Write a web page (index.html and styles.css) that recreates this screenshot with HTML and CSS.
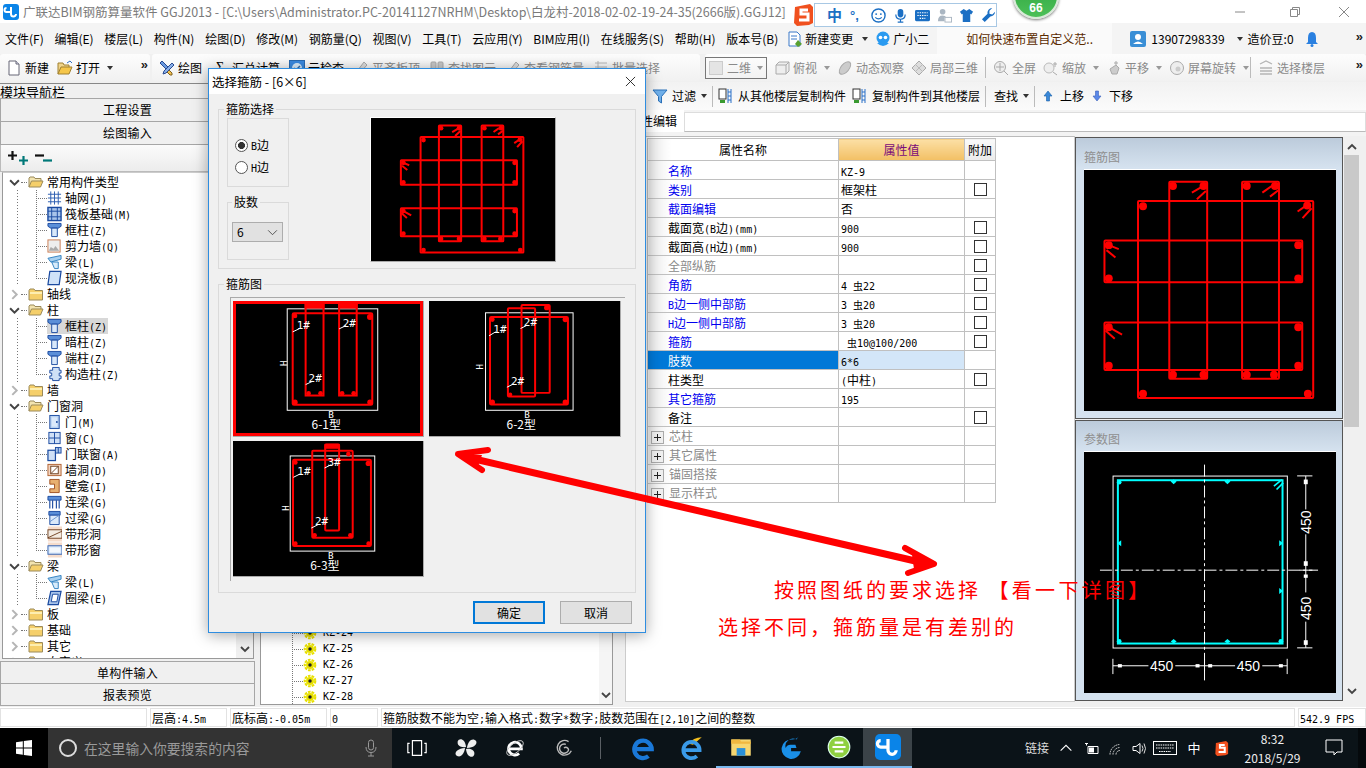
FILE: index.html
```html
<!DOCTYPE html>
<html lang="zh">
<head>
<meta charset="utf-8">
<title>广联达BIM钢筋算量软件 GGJ2013</title>
<link rel="stylesheet" href="styles.css">
</head>
<body>
<svg class="defs" aria-hidden="true">
  <symbol id="logo" viewBox="0 0 16 16"><rect x="0" y="0" width="16" height="16" rx="3" fill="#0a84e8"/><path d="M8 3v7a2.5 2.5 0 0 0 5 0M8 8H3.5a2 2 0 0 1 0-4" fill="none" stroke="#fff" stroke-width="2"/></symbol>
  <symbol id="folder" viewBox="0 0 16 16"><path d="M1 4.5 2 3h4l1 1.5h7.5V14H1z" fill="#f5cf6a" stroke="#9b8a5a"/><path d="M2 6h12v2H2z" fill="#fdeeb0"/></symbol>
  <symbol id="folderopen" viewBox="0 0 16 16"><path d="M1 13V4l1-1h4l1 1.5h6V7" fill="#f3e4b0" stroke="#9b8a5a"/><path d="M1 13 3.5 7H15l-2.5 6z" fill="#f5cf6a" stroke="#9b8a5a"/></symbol>
  <symbol id="col" viewBox="0 0 16 16"><path d="M1 1h14v3l-3 2H4L1 4z" fill="#5b8fd8" stroke="#1a4aa0"/><path d="M5 6h6v9H5z" fill="#d8e8fb" stroke="#1a4aa0"/></symbol>
  <symbol id="gridic" viewBox="0 0 16 16"><path d="M1 4h14M1 8h14M1 12h14M4 1v14M8 1v14M12 1v14" stroke="#2a5cb0" fill="none"/></symbol>
  <symbol id="raft" viewBox="0 0 16 16"><rect x="1" y="1" width="14" height="14" fill="#a8c4ea" stroke="#1a4aa0" stroke-width="1.5"/><path d="M1 5h14M1 11h14M5 1v14M11 1v14" stroke="#1a4aa0" fill="none"/></symbol>
  <symbol id="shear" viewBox="0 0 16 16"><rect x="1" y="1.500" width="13" height="13" fill="#eee" stroke="#c87a50"/><path d="M2 13 4 9l3 2 2-3 4 5z" fill="#aaa"/></symbol>
  <symbol id="beam" viewBox="0 0 16 16"><path d="M1 4 15 1v4L4 8z" fill="#a8d0f0" stroke="#3080c0"/><path d="M5 8h7v7H8z" fill="#d8ecfb" stroke="#3080c0"/></symbol>
  <symbol id="slab" viewBox="0 0 16 16"><path d="M3 1h12l-2 14H1z" fill="#cfe2f8" stroke="#1a4aa0" stroke-width="1.300"/></symbol>
  <symbol id="ccol" viewBox="0 0 16 16"><path d="M6 1h7v3h2v3h-2v3h2v3h-2v2H6v-2H3v-3h2V7H3V4h3z" fill="#cfe0f6" stroke="#1a4aa0"/></symbol>
  <symbol id="door" viewBox="0 0 16 16"><rect x="3" y="1" width="10" height="14" fill="#b8d2f2" stroke="#1a4aa0"/><rect x="5" y="3" width="6" height="10" fill="#dbe9fa"/><circle cx="10.500" cy="8" r="1" fill="#1a4aa0"/></symbol>
  <symbol id="window" viewBox="0 0 16 16"><rect x="2" y="2" width="12" height="12" fill="#cfe0f6" stroke="#1a4aa0"/><path d="M8 2v12M2 8h12" stroke="#1a4aa0"/></symbol>
  <symbol id="dw" viewBox="0 0 16 16"><rect x="1" y="4" width="8" height="11" fill="#cfe0f6" stroke="#1a4aa0" stroke-width="1.300"/><rect x="9" y="1" width="6" height="6" fill="#a8c4ea" stroke="#1a4aa0"/><path d="M12 1v6" stroke="#1a4aa0"/></symbol>
  <symbol id="hole" viewBox="0 0 16 16"><rect x="1" y="2" width="14" height="12" fill="#f3d5c0" stroke="#b06030"/><rect x="4" y="4" width="8" height="8" fill="#fff" stroke="#704020"/><path d="M4 12l8-8" stroke="#704020"/></symbol>
  <symbol id="niche" viewBox="0 0 16 16"><path d="M3 1h10v14H3v-4h5V6H3z" fill="#e8b070" stroke="#a05020"/></symbol>
  <symbol id="lb" viewBox="0 0 16 16"><path d="M1 2h14v4H1z" fill="#5b8fd8" stroke="#1a4aa0"/><path d="M3 6v9M6 6v9M10 6v9M13 6v9" stroke="#1a4aa0" fill="none" stroke-width="1.200"/></symbol>
  <symbol id="lintel" viewBox="0 0 16 16"><path d="M2 1h12v4H2z" fill="#5b8fd8" stroke="#1a4aa0"/><path d="M3 5h10v10H3z" fill="#dbe9fa" stroke="#1a4aa0"/><path d="M3 12 13 5" stroke="#6a94d0"/></symbol>
  <symbol id="bandh" viewBox="0 0 16 16"><rect x="1" y="0" width="15" height="16" fill="#f6dccb"/><rect x="1" y="3.500" width="15" height="9" fill="#f3ebe2" stroke="#704020"/><path d="M1 12 16 5" stroke="#704020"/></symbol>
  <symbol id="bandw" viewBox="0 0 16 16"><rect x="1" y="0" width="15" height="16" fill="#f6dccb"/><rect x="1" y="3.500" width="15" height="9" fill="#dbe9fa" stroke="#3060b0"/><rect x="3" y="5.500" width="11" height="5" fill="#f4f8fd"/></symbol>
  <symbol id="ring" viewBox="0 0 16 16"><path d="M4 1h11l-3 14H1z" fill="#a8c4ea" stroke="#1a4aa0" stroke-width="1.300"/><path d="M6 4h6l-1.500 8H4.500z" fill="#fff" stroke="#1a4aa0"/></symbol>
  <symbol id="gear" viewBox="0 0 16 16"><circle cx="8" cy="8" r="6" fill="none" stroke="#e8e000" stroke-width="2.500" stroke-dasharray="3 1.200"/><circle cx="8" cy="8" r="4.500" fill="#e8e000"/><circle cx="8" cy="8" r="2" fill="#222"/></symbol>
  <symbol id="caretd" viewBox="0 0 10 10"><path d="M1 3l4 4 4-4" fill="none" stroke="#444" stroke-width="1.800"/></symbol>
  <symbol id="caretu" viewBox="0 0 10 10"><path d="M1 7l4-4 4 4" fill="none" stroke="#444" stroke-width="1.800"/></symbol>
  <symbol id="caretr" viewBox="0 0 10 10"><path d="M3 1l4 4-4 4" fill="none" stroke="#b5b5b5" stroke-width="1.800"/></symbol>
  <symbol id="new" viewBox="0 0 16 16"><path d="M3 1h7l3 3v11H3z" fill="#fff" stroke="#667"/><path d="M10 1v3h3" fill="#dde" stroke="#667"/></symbol>
  <symbol id="open" viewBox="0 0 16 16"><path d="M1 14V3h5l1 2h5v2" fill="#f0d48a" stroke="#a08030"/><path d="M1 14 4 7h11l-3 7z" fill="#f5c64a" stroke="#a08030"/><path d="M10 3l3-2 2 2" fill="none" stroke="#3070c0"/></symbol>
  <symbol id="draw" viewBox="0 0 16 16"><path d="M3 1l6 6-2 2-6-6z" fill="#6a9ae0" stroke="#2a4a90"/><path d="M8 8l5 5v2h-2L6 10z" fill="#f0c050" stroke="#806020"/><path d="M13 3l2 2-8 8-3 1 1-3z" fill="#8ab0e8" stroke="#2a4a90"/></symbol>
  <symbol id="cloud" viewBox="0 0 16 16"><rect x="0.500" y="0.500" width="15" height="15" fill="#3a8ae0" stroke="#2a6ab0"/><circle cx="8" cy="8" r="5" fill="#d8ecfb"/><path d="M5 8l2 2 4-4" fill="none" stroke="#2a6ab0" stroke-width="1.500"/></symbol>
  <symbol id="graytool" viewBox="0 0 16 16"><path d="M2 14 11 2l3 3-9 10z" fill="#ddd" stroke="#aaa"/></symbol>
  <symbol id="binoc" viewBox="0 0 16 16"><rect x="2" y="2" width="5" height="12" rx="1" fill="#c9c9c9" stroke="#aaa"/><rect x="9" y="2" width="5" height="12" rx="1" fill="#c9c9c9" stroke="#aaa"/></symbol>
  <symbol id="tree3" viewBox="0 0 16 16"><path d="M2 3h12M2 7h12M2 11h12M5 1v14" stroke="#b8b8b8" fill="none"/></symbol>
  <symbol id="cube" viewBox="0 0 16 16"><path d="M2 5 5 2h10v9l-3 3H2z" fill="#eee" stroke="#aaa"/><path d="M2 5h10v9M12 5l3-3" fill="none" stroke="#aaa"/></symbol>
  <symbol id="orbit" viewBox="0 0 16 16"><ellipse cx="8" cy="8" rx="4" ry="7.500" transform="rotate(40 8 8)" fill="#ccc" stroke="#aaa"/></symbol>
  <symbol id="cubes" viewBox="0 0 16 16"><path d="M8 1l7 7-7 7-7-7z" fill="#ddd" stroke="#aaa"/><path d="M4 4l8 8M12 4l-8 8" stroke="#bbb"/></symbol>
  <symbol id="zoomall" viewBox="0 0 16 16"><circle cx="7" cy="7" r="5.500" fill="#eee" stroke="#aaa"/><path d="M7 3v8M3 7h8M11 11l4 4" stroke="#aaa"/></symbol>
  <symbol id="zoomi" viewBox="0 0 16 16"><circle cx="6" cy="8" r="5" fill="#eee" stroke="#bbb"/><path d="M10 12l4 3M12 2v5M10 4h4" stroke="#aaa"/></symbol>
  <symbol id="hand" viewBox="0 0 16 16"><path d="M4 9l6-4 3 3-2 6H6z" fill="#ccc" stroke="#aaa"/><path d="M10 5V1M8 3h4" stroke="#aaa"/></symbol>
  <symbol id="rotate" viewBox="0 0 16 16"><circle cx="8" cy="8" r="6.500" fill="#eee" stroke="#aaa"/><circle cx="9" cy="9" r="2.500" fill="#ccc"/></symbol>
  <symbol id="layers" viewBox="0 0 16 16"><path d="M2 4l6-3 6 3M2 8h12M2 11h12M2 14h12" fill="none" stroke="#b5b5b5" stroke-width="1.300"/></symbol>
  <symbol id="doc" viewBox="0 0 16 16"><path d="M2 1h8l3 3v11H2z" fill="#fff" stroke="#3a78c8"/><path d="M4 5h6M4 8h6" stroke="#3a78c8"/><path d="M11 9l4 4-4 3-3-3z" fill="#58a030"/></symbol>
  <symbol id="mascot" viewBox="0 0 16 16"><circle cx="8" cy="7" r="6.500" fill="#2a9af0"/><path d="M2 12q6 6 12 0" fill="#2a9af0"/><circle cx="5.500" cy="6.500" r="1.800" fill="#fff"/><circle cx="10.500" cy="6.500" r="1.800" fill="#fff"/></symbol>
  <symbol id="user" viewBox="0 0 16 16"><rect width="16" height="16" rx="2" fill="#3a8fd6"/><circle cx="8" cy="6" r="3" fill="#fff"/><path d="M3 13q5-5 10 0z" fill="#fff"/></symbol>
  <symbol id="bell" viewBox="0 0 16 16"><path d="M8 1q-4 0-4 6v4l-2 2h12l-2-2V7q0-6-4-6z" fill="#2a80e0"/><circle cx="8" cy="14.500" r="1.500" fill="#2a80e0"/></symbol>
  <symbol id="funnel" viewBox="0 0 16 16"><path d="M1 2h14L9.500 8.500V15l-3-2V8.500z" fill="#70b0ea" stroke="#2a70b8"/></symbol>
  <symbol id="copyin" viewBox="0 0 16 16"><rect x="1" y="1" width="7" height="10" fill="#fff" stroke="#333"/><path d="M10 1v14M13 1v14M10 4h3M10 8h3M10 12h3" stroke="#2a70c8"/><path d="M2 12h5v3H2z" fill="#3a9a30"/></symbol>
  <symbol id="up" viewBox="0 0 16 16"><path d="M8 3l4 5h-2.500v5h-3V8H4z" fill="#3a88d8" stroke="#1a60a8" stroke-width=".6"/></symbol>
  <symbol id="down" viewBox="0 0 16 16"><path d="M8 13l4-5H9.500V3h-3v5H4z" fill="#5a88e8" stroke="#3a60b8" stroke-width=".6"/></symbol>
  <symbol id="sogou" viewBox="0 0 20 22"><path d="M1 3 16 0l3 3v16l-4 2-12 1-3-3z" fill="#f0501e"/><path d="M14 6H7v4h7v6H5" fill="none" stroke="#fff" stroke-width="3"/></symbol>
  <symbol id="rebar" viewBox="-49 113 939 733">
    <g fill="none" stroke="#f00" stroke-width="2">
      <rect x="203" y="210" width="527" height="593" rx="3" vector-effect="non-scaling-stroke"/>
      <rect x="102" y="329" width="595" height="126" rx="3" vector-effect="non-scaling-stroke"/>
      <rect x="102" y="576" width="595" height="143" rx="3" vector-effect="non-scaling-stroke"/>
      <rect x="297" y="152" width="114" height="593" rx="3" vector-effect="non-scaling-stroke"/>
      <rect x="516" y="152" width="111" height="593" rx="3" vector-effect="non-scaling-stroke"/>
      <path d="M400 165 365 185M407 180 380 205M605 165 577 185M625 178 600 197M712 222 683 242M725 232 698 262M115 343 145 355M108 358 135 380M115 590 155 612M105 600 133 625" vector-effect="non-scaling-stroke"/>
    </g>
    <g fill="#f00">
      <circle cx="218" cy="226" r="12"/><circle cx="712" cy="224" r="12"/><circle cx="218" cy="790" r="12"/><circle cx="714" cy="790" r="12"/>
      <circle cx="115" cy="343" r="12"/><circle cx="685" cy="343" r="12"/><circle cx="115" cy="443" r="12"/><circle cx="685" cy="443" r="12"/>
      <circle cx="115" cy="590" r="12"/><circle cx="685" cy="590" r="12"/><circle cx="115" cy="706" r="12"/><circle cx="685" cy="706" r="12"/>
      <circle cx="308" cy="165" r="12"/><circle cx="400" cy="165" r="12"/><circle cx="308" cy="733" r="12"/><circle cx="400" cy="733" r="12"/>
      <circle cx="530" cy="165" r="12"/><circle cx="615" cy="165" r="12"/><circle cx="530" cy="733" r="12"/><circle cx="612" cy="733" r="12"/>
    </g>
  </symbol>
</svg>

<div class="desk">
  <header class="titlebar">
    <svg class="ic logo"><use href="#logo"/></svg>
    <span class="title-text">广联达BIM钢筋算量软件 GGJ2013 - [C:\Users\Administrator.PC-20141127NRHM\Desktop\白龙村-2018-02-02-19-24-35(2666版).GGJ12]</span>
    <div class="winctl">
      <svg class="wc" viewBox="0 0 12 12"><path d="M1 6h10" stroke="#888"/></svg>
      <svg class="wc" viewBox="0 0 12 12"><path d="M1.500 3.500h7v7h-7zM3.500 3.500v-2h7v7h-2" fill="none" stroke="#888"/></svg>
      <svg class="wc" viewBox="0 0 12 12"><path d="M1 1l10 10M11 1 1 11" stroke="#888"/></svg>
    </div>
  </header>

  <nav class="menubar">
    <div class="menus">
      <span>文件(F)</span><span>编辑(E)</span><span>楼层(L)</span><span>构件(N)</span><span>绘图(D)</span><span>修改(M)</span><span>钢筋量(Q)</span><span>视图(V)</span><span>工具(T)</span><span>云应用(Y)</span><span>BIM应用(I)</span><span>在线服务(S)</span><span>帮助(H)</span><span>版本号(B)</span>
    </div>
    <div class="menu-extra">
      <svg class="ic"><use href="#doc"/></svg><span>新建变更</span><i class="tri"></i>
      <svg class="ic mascot"><use href="#mascot"/></svg><span>广小二</span>
    </div>
    <div class="tipbox">如何快速布置自定义范..</div>
    <div class="account">
      <svg class="ic"><use href="#user"/></svg><span>13907298339</span><i class="tri"></i><span class="bean">造价豆:0</span>
      <svg class="ic bell"><use href="#bell"/></svg><span class="more">»</span>
    </div>
  </nav>

  <div class="toolbar">
    <div class="chunk chunk-a">
      <span class="tool"><svg class="ic"><use href="#new"/></svg>新建</span>
      <span class="tool"><svg class="ic"><use href="#open"/></svg>打开<i class="tri"></i></span>
      <span class="more more-a">»</span>
    </div>
    <div class="chunk chunk-b">
      <span class="tool"><svg class="ic"><use href="#draw"/></svg>绘图</span>
      <span class="tool"><b class="sigma">Σ</b>汇总计算</span>
      <span class="tool"><svg class="ic"><use href="#cloud"/></svg>云检查</span>
      <span class="tool off"><svg class="ic"><use href="#graytool"/></svg>平齐板顶</span>
      <span class="tool off"><svg class="ic"><use href="#binoc"/></svg>查找图元</span>
      <span class="tool off"><svg class="ic"><use href="#graytool"/></svg>查看钢筋量</span>
      <span class="tool off"><svg class="ic"><use href="#tree3"/></svg>批量选择</span>
    </div>
    <div class="chunk chunk-c">
      <span class="combo2d"><i class="sq"></i>二维<i class="tri off"></i></span>
      <span class="tool off"><svg class="ic"><use href="#cube"/></svg>俯视<i class="tri off"></i></span>
      <span class="tool off"><svg class="ic"><use href="#orbit"/></svg>动态观察</span>
      <span class="tool off"><svg class="ic"><use href="#cubes"/></svg>局部三维</span>
      <i class="sep"></i>
      <span class="tool off"><svg class="ic"><use href="#zoomall"/></svg>全屏</span>
      <span class="tool off"><svg class="ic"><use href="#zoomi"/></svg>缩放<i class="tri off"></i></span>
      <span class="tool off"><svg class="ic"><use href="#hand"/></svg>平移<i class="tri off"></i></span>
      <span class="tool off"><svg class="ic"><use href="#rotate"/></svg>屏幕旋转<i class="tri off"></i></span>
      <i class="sep sep-tight"></i>
      <span class="tool off"><svg class="ic"><use href="#layers"/></svg>选择楼层</span>
      <span class="more more-c">»</span>
    </div>
  </div>

  <main class="main">
    <aside class="nav">
      <div class="nav-title">模块导航栏</div>
      <div class="nav-btn">工程设置</div>
      <div class="nav-btn">绘图输入</div>
      <div class="nav-tools">
        <svg class="expand" viewBox="0 0 24 14"><path d="M3 4.500h9M7.500 0v9" stroke="#111" stroke-width="2.200" fill="none"/><path d="M14 9.500h9M18.500 5v9" stroke="#007878" stroke-width="2.200" fill="none"/></svg>
        <svg class="expand" viewBox="0 0 24 14"><path d="M6 4.500h9" stroke="#111" stroke-width="2.200"/><path d="M14 9.500h9" stroke="#007878" stroke-width="2.200"/></svg>
      </div>
      <div class="tree-wrap">
        <ul class="tree">
          <li class="grp"><svg class="caret"><use href="#caretd"/></svg><i class="stub"></i><svg class="ic"><use href="#folderopen"/></svg><span class="lb">常用构件类型</span></li>
          <li><ul class="kids">
            <li class="kid"><i class="elbow"></i><svg class="ic"><use href="#gridic"/></svg><span class="lb">轴网<span class="a">(J)</span></span></li>
            <li class="kid"><i class="elbow"></i><svg class="ic"><use href="#raft"/></svg><span class="lb">筏板基础<span class="a">(M)</span></span></li>
            <li class="kid"><i class="elbow"></i><svg class="ic"><use href="#col"/></svg><span class="lb">框柱<span class="a">(Z)</span></span></li>
            <li class="kid"><i class="elbow"></i><svg class="ic"><use href="#shear"/></svg><span class="lb">剪力墙<span class="a">(Q)</span></span></li>
            <li class="kid"><i class="elbow"></i><svg class="ic"><use href="#beam"/></svg><span class="lb">梁<span class="a">(L)</span></span></li>
            <li class="kid last"><i class="elbow"></i><svg class="ic"><use href="#slab"/></svg><span class="lb">现浇板<span class="a">(B)</span></span></li>
          </ul></li>
          <li class="grp"><svg class="caret"><use href="#caretr"/></svg><i class="stub"></i><svg class="ic"><use href="#folder"/></svg><span class="lb">轴线</span></li>
          <li class="grp"><svg class="caret"><use href="#caretd"/></svg><i class="stub"></i><svg class="ic"><use href="#folderopen"/></svg><span class="lb">柱</span></li>
          <li><ul class="kids">
            <li class="kid sel"><i class="elbow"></i><span class="hl"><svg class="ic"><use href="#col"/></svg><span class="lb">框柱<span class="a">(Z)</span></span></span></li>
            <li class="kid"><i class="elbow"></i><svg class="ic"><use href="#col"/></svg><span class="lb">暗柱<span class="a">(Z)</span></span></li>
            <li class="kid"><i class="elbow"></i><svg class="ic"><use href="#col"/></svg><span class="lb">端柱<span class="a">(Z)</span></span></li>
            <li class="kid last"><i class="elbow"></i><svg class="ic"><use href="#ccol"/></svg><span class="lb">构造柱<span class="a">(Z)</span></span></li>
          </ul></li>
          <li class="grp"><svg class="caret"><use href="#caretr"/></svg><i class="stub"></i><svg class="ic"><use href="#folder"/></svg><span class="lb">墙</span></li>
          <li class="grp"><svg class="caret"><use href="#caretd"/></svg><i class="stub"></i><svg class="ic"><use href="#folderopen"/></svg><span class="lb">门窗洞</span></li>
          <li><ul class="kids">
            <li class="kid"><i class="elbow"></i><svg class="ic"><use href="#door"/></svg><span class="lb">门<span class="a">(M)</span></span></li>
            <li class="kid"><i class="elbow"></i><svg class="ic"><use href="#window"/></svg><span class="lb">窗<span class="a">(C)</span></span></li>
            <li class="kid"><i class="elbow"></i><svg class="ic"><use href="#dw"/></svg><span class="lb">门联窗<span class="a">(A)</span></span></li>
            <li class="kid"><i class="elbow"></i><svg class="ic"><use href="#hole"/></svg><span class="lb">墙洞<span class="a">(D)</span></span></li>
            <li class="kid"><i class="elbow"></i><svg class="ic"><use href="#niche"/></svg><span class="lb">壁龛<span class="a">(I)</span></span></li>
            <li class="kid"><i class="elbow"></i><svg class="ic"><use href="#lb"/></svg><span class="lb">连梁<span class="a">(G)</span></span></li>
            <li class="kid"><i class="elbow"></i><svg class="ic"><use href="#lintel"/></svg><span class="lb">过梁<span class="a">(G)</span></span></li>
            <li class="kid"><i class="elbow"></i><svg class="ic"><use href="#bandh"/></svg><span class="lb">带形洞</span></li>
            <li class="kid last"><i class="elbow"></i><svg class="ic"><use href="#bandw"/></svg><span class="lb">带形窗</span></li>
          </ul></li>
          <li class="grp"><svg class="caret"><use href="#caretd"/></svg><i class="stub"></i><svg class="ic"><use href="#folderopen"/></svg><span class="lb">梁</span></li>
          <li><ul class="kids">
            <li class="kid"><i class="elbow"></i><svg class="ic"><use href="#beam"/></svg><span class="lb">梁<span class="a">(L)</span></span></li>
            <li class="kid last"><i class="elbow"></i><svg class="ic"><use href="#ring"/></svg><span class="lb">圈梁<span class="a">(E)</span></span></li>
          </ul></li>
          <li class="grp"><svg class="caret"><use href="#caretr"/></svg><i class="stub"></i><svg class="ic"><use href="#folder"/></svg><span class="lb">板</span></li>
          <li class="grp"><svg class="caret"><use href="#caretr"/></svg><i class="stub"></i><svg class="ic"><use href="#folder"/></svg><span class="lb">基础</span></li>
          <li class="grp"><svg class="caret"><use href="#caretr"/></svg><i class="stub"></i><svg class="ic"><use href="#folder"/></svg><span class="lb">其它</span></li>
          <li class="grp"><svg class="caret"><use href="#caretr"/></svg><i class="stub"></i><svg class="ic"><use href="#folder"/></svg><span class="lb">自定义</span></li>
        </ul>
        <div class="vscroll"><svg class="arrow"><use href="#caretd"/></svg></div>
      </div>
      <div class="nav-btn low">单构件输入</div>
      <div class="nav-btn low">报表预览</div>
    </aside>

    <section class="mid">
      <ul class="kz">
        <li><i class="kzline"></i><svg class="ic"><use href="#gear"/></svg><span>KZ-24</span></li>
        <li><i class="kzline"></i><svg class="ic"><use href="#gear"/></svg><span>KZ-25</span></li>
        <li><i class="kzline"></i><svg class="ic"><use href="#gear"/></svg><span>KZ-26</span></li>
        <li><i class="kzline"></i><svg class="ic"><use href="#gear"/></svg><span>KZ-27</span></li>
        <li><i class="kzline"></i><svg class="ic"><use href="#gear"/></svg><span>KZ-28</span></li>
      </ul>
      <div class="vscroll vs-mid"><svg class="arrow"><use href="#caretd"/></svg></div>
    </section>

    <section class="right">
      <div class="row3">
        <span class="tool"><svg class="ic"><use href="#funnel"/></svg>过滤<i class="tri"></i></span>
        <i class="sep"></i>
        <span class="tool"><svg class="ic"><use href="#copyin"/></svg>从其他楼层复制构件</span>
        <span class="tool copy2"><svg class="ic"><use href="#copyin"/></svg>复制构件到其他楼层</span>
        <i class="sep"></i>
        <span class="tool find">查找<i class="tri"></i></span>
        <i class="sep"></i>
        <span class="tool"><svg class="ic"><use href="#up"/></svg>上移</span>
        <span class="tool"><svg class="ic"><use href="#down"/></svg>下移</span>
      </div>
      <div class="tabs"><span class="tab">属性编辑</span><span class="tabfill"></span></div>
      <div class="body">
        <div class="sheet">
          <table class="props">
            <thead><tr><th>属性名称</th><th class="th-val">属性值</th><th class="th-add">附加</th></tr></thead>
            <tbody>
              <tr class="blue"><td>名称</td><td><span class="a">KZ-9</span></td><td></td></tr>
              <tr class="blue"><td>类别</td><td>框架柱</td><td><i class="chk"></i></td></tr>
              <tr class="blue"><td>截面编辑</td><td>否</td><td></td></tr>
              <tr><td>截面宽<span class="a">(B</span>边<span class="a">)(mm)</span></td><td><span class="a">900</span></td><td><i class="chk"></i></td></tr>
              <tr><td>截面高<span class="a">(H</span>边<span class="a">)(mm)</span></td><td><span class="a">900</span></td><td><i class="chk"></i></td></tr>
              <tr class="gray"><td>全部纵筋</td><td></td><td><i class="chk"></i></td></tr>
              <tr class="blue"><td>角筋</td><td><span class="a">4 </span><span class="bar">虫</span><span class="a">22</span></td><td><i class="chk"></i></td></tr>
              <tr class="blue"><td><span class="a">B</span>边一侧中部筋</td><td><span class="a">3 </span><span class="bar">虫</span><span class="a">20</span></td><td><i class="chk"></i></td></tr>
              <tr class="blue"><td><span class="a">H</span>边一侧中部筋</td><td><span class="a">3 </span><span class="bar">虫</span><span class="a">20</span></td><td><i class="chk"></i></td></tr>
              <tr class="blue"><td>箍筋</td><td><span class="a"> </span><span class="bar">虫</span><span class="a">10@100/200</span></td><td><i class="chk"></i></td></tr>
              <tr class="cur"><td>肢数</td><td><span class="a">6*6</span></td><td></td></tr>
              <tr><td>柱类型</td><td><span class="a">(</span>中柱<span class="a">)</span></td><td><i class="chk"></i></td></tr>
              <tr class="blue"><td>其它箍筋</td><td><span class="a">195</span></td><td></td></tr>
              <tr><td>备注</td><td></td><td><i class="chk"></i></td></tr>
              <tr class="gray"><td><i class="plus"></i>芯柱</td><td></td><td></td></tr>
              <tr class="gray"><td><i class="plus"></i>其它属性</td><td></td><td></td></tr>
              <tr class="gray"><td><i class="plus"></i>锚固搭接</td><td></td><td></td></tr>
              <tr class="gray"><td><i class="plus"></i>显示样式</td><td></td><td></td></tr>
            </tbody>
          </table>
        </div>
        <div class="views">
          <div class="pv pv-a">
            <div class="pv-h">箍筋图</div>
            <svg class="pv-img" viewBox="42 117 755 725"><use href="#rebar" x="-49" y="113" width="939" height="733"/></svg>
          </div>
          <div class="pv pv-b">
            <div class="pv-h">参数图</div>
            <svg class="pv-img" viewBox="42 107 755 726">
              <rect x="127.500" y="179.500" width="525" height="518" fill="none" stroke="#fff" stroke-width="3"/>
              <rect x="142" y="192" width="496" height="492" fill="none" stroke="#0ff" stroke-width="6"/>
              <path d="M403 145V795M88 463H745" stroke="#fff" stroke-width="3" stroke-dasharray="36 9 9 9" fill="none"/>
              <path d="M612 210 636 190M620 220 640 200" stroke="#0ff" stroke-width="5"/>
              <g fill="#0ff">
                <path d="M310 190l9 6-9 8-9-8zM472 190l9 6-9 8-9-8zM310 670l9 8-9 6-9-6zM472 670l9 8-9 6-9-6zM140 382l12-9v18zM640 382l-12-9v18zM640 526l-12-9v18z"/>
                <circle cx="146" cy="198" r="7"/><circle cx="146" cy="677" r="7"/><circle cx="633" cy="677" r="7"/>
              </g>
              <g stroke="#fff" stroke-width="3" fill="none">
                <path d="M682 179h46M682 697h46M708 179V280M708 355V530M708 618V697M690 463h38"/>
                <path d="M127 730v46M652 730v46M403 730v46M127 751H234M315 751H495M577 751H652"/>
              </g>
              <g fill="#fff"><rect x="702" y="190" width="12" height="14"/><rect x="702" y="436" width="12" height="14"/><rect x="702" y="476" width="12" height="10"/><rect x="702" y="674" width="12" height="14"/><rect x="142" y="746" width="12" height="10"/><rect x="376" y="746" width="12" height="10"/><rect x="414" y="746" width="12" height="10"/><rect x="627" y="746" width="12" height="10"/></g>
              <text class="dim" x="274" y="768" text-anchor="middle">450</text>
              <text class="dim" x="535" y="768" text-anchor="middle">450</text>
              <text class="dim" text-anchor="middle" transform="translate(724 318) rotate(-90)">450</text>
              <text class="dim" text-anchor="middle" transform="translate(724 578) rotate(-90)">450</text>
            </svg>
          </div>
        </div>
        <div class="vscroll vs-view"><svg class="arrow arrow-u"><use href="#caretu"/></svg><i class="vs-track"></i><svg class="arrow arrow-d"><use href="#caretd"/></svg></div>
      </div>
    </section>
  </main>

  <footer class="status">
    <span class="cell c1"></span>
    <span class="cell c2">层高<span class="a">:4.5m</span></span>
    <span class="cell c3">底标高<span class="a">:-0.05m</span></span>
    <span class="cell c4"><span class="a">0</span></span>
    <span class="cell c5">箍筋肢数不能为空<span class="a">;</span>输入格式<span class="a">:</span>数字<span class="a">*</span>数字<span class="a">;</span>肢数范围在<span class="a">[2,10]</span>之间的整数</span>
    <span class="cell c6"><span class="a">542.9 FPS</span></span>
  </footer>

  <div class="taskbar">
    <div class="start"><svg class="winlogo" viewBox="0 0 16 16"><path d="M0 2.200 6.800 1.200V7.500H0zM7.800 1 16 0V7.500H7.800zM0 8.500H6.800V14.800L0 13.800zM7.800 8.500H16V16L7.800 15z" fill="#fff"/></svg></div>
    <div class="search"><i class="cortana"></i><span>在这里输入你要搜索的内容</span><svg class="mic" viewBox="0 0 12 18"><rect x="3.500" y="1" width="5" height="10" rx="2.500" fill="none" stroke="#999"/><path d="M1 8q0 5.500 5 5.500T11 8M6 13.500V17M3 17h6" fill="none" stroke="#999"/></svg></div>
    <div class="tb"><svg class="tbi" viewBox="0 0 24 24"><path d="M7 4h10v16H7zM4 7H2v10h2M20 7h2v10h-2" fill="none" stroke="#fff" stroke-width="1.300"/></svg></div>
    <div class="tb"><svg class="tbi" viewBox="0 0 24 24"><g fill="#eee"><path d="M12 11C6 12 2 9 3 5s8-4 9 6z"/><path d="M13 12c1-6 4-10 8-9s4 8-8 9z"/><path d="M12 13c6-1 10 2 9 6s-8 4-9-6z"/><path d="M11 12c-1 6-4 10-8 9s-4-8 8-9z"/></g></svg></div>
    <div class="tb"><svg class="tbi" viewBox="0 0 24 24"><path d="M6 13h13a7 7 0 1 0-2.500 5" fill="none" stroke="#fff" stroke-width="3"/><ellipse cx="12" cy="12" rx="11" ry="5" transform="rotate(-40 12 12)" fill="none" stroke="#ccc"/></svg></div>
    <div class="tb"><svg class="tbi" viewBox="0 0 24 24"><path d="M17 5A8 8 0 1 0 20 15M14 8a5 5 0 1 0 3 6 3 3 0 0 0-5-2" fill="none" stroke="#bbb" stroke-width="1.500"/></svg></div>
    <i class="tbsep"></i>
    <div class="tb"><svg class="tbi big" viewBox="0 0 24 24"><path d="M5 13h15a8 8 0 1 0-3 6.500" fill="none" stroke="#1a78d8" stroke-width="4"/></svg></div>
    <div class="tb"><svg class="tbi big" viewBox="0 0 24 24"><path d="M21 2q-8 0-12 6l4 1z" fill="#f5c020"/><path d="M5 14h14a7.500 7.500 0 1 0-2.500 5.500" fill="none" stroke="#3a9ae8" stroke-width="3.500"/></svg></div>
    <div class="tb run"><svg class="tbi big" viewBox="0 0 24 24"><path d="M3 5h18v15H3z" fill="#f6d670"/><path d="M3 5h8l1 2h9v2H3z" fill="#f0b840"/><rect x="8" y="13" width="8" height="7" fill="#2a90d8"/></svg></div>
    <div class="tb run"><svg class="tbi big" viewBox="0 0 24 24"><path d="M20 2q-2 3-6 3a9 9 0 1 0 8 11h-9v-3h5l-1-3h-4a5 5 0 0 0-5 3 7 7 0 0 1 10-8z" fill="#1a90e8"/></svg></div>
    <div class="tb run"><svg class="tbi big" viewBox="0 0 24 24"><circle cx="12" cy="12" r="10" fill="#8fd040" stroke="#dfe"/><path d="M6 12h12M8 8h8M8 16h8" stroke="#fff" stroke-width="2"/></svg></div>
    <div class="tb run act"><svg class="tbi big" viewBox="0 0 24 24"><use href="#logo"/></svg></div>
    <div class="tray">
      <span class="tray-t">链接</span>
      <svg class="tri-i" viewBox="0 0 14 14"><path d="M2 9l5-5 5 5" fill="none" stroke="#fff"/></svg>
      <svg class="tri-i" viewBox="0 0 16 14"><path d="M1 2h3M2.500 2v2M4 5h10v7H4z" fill="none" stroke="#fff"/><rect x="5" y="6" width="5" height="5" fill="#fff"/></svg>
      <svg class="tri-i" viewBox="0 0 16 14"><path d="M2 13a10 10 0 0 1 10-10M5 13a7 7 0 0 1 7-7M8 13a4 4 0 0 1 4-4" fill="none" stroke="#ddd" stroke-dasharray="1.500 .7"/></svg>
      <svg class="tri-i" viewBox="0 0 16 14"><path d="M2 5h3l4-3v10L5 9H2z" fill="none" stroke="#fff"/><path d="M11 4q2 3 0 6M13 2q3 5 0 10" fill="none" stroke="#ddd"/></svg>
      <svg class="tri-kb" viewBox="0 0 24 16"><rect x=".5" y="1.500" width="23" height="13" fill="none" stroke="#fff"/><path d="M3 5h18M3 8h18M6 11.500h12" stroke="#fff" stroke-dasharray="1.500 .8"/></svg>
      <span class="tray-z">中</span>
      <svg class="tri-i" viewBox="0 0 20 22"><use href="#sogou"/></svg>
      <span class="clock"><span>8:32</span><span>2018/5/29</span></span>
      <svg class="tri-n" viewBox="0 0 18 18"><path d="M1 1h16v12h-5l-3 3v-3H1z" fill="none" stroke="#fff"/></svg>
      <i class="showdesk"></i>
    </div>
  </div>

  <div class="ime">
    <svg class="ime-s" viewBox="0 0 20 22"><use href="#sogou"/></svg>
    <div class="ime-bar">
      <b class="ime-z">中</b>
      <b class="ime-p">°,</b>
      <svg class="ime-i" viewBox="0 0 16 16"><circle cx="8" cy="8" r="7" fill="none" stroke="#1b6fc4" stroke-width="1.500"/><circle cx="5.500" cy="6.500" r="1" fill="#1b6fc4"/><circle cx="10.500" cy="6.500" r="1" fill="#1b6fc4"/><path d="M4.500 10q3.500 3 7 0" fill="none" stroke="#1b6fc4" stroke-width="1.300"/></svg>
      <svg class="ime-i" viewBox="0 0 16 16"><rect x="5" y="1" width="6" height="9" rx="3" fill="#1b6fc4"/><path d="M3 7q0 5 5 5t5-5M8 12v3M5 15h6" fill="none" stroke="#1b6fc4" stroke-width="1.300"/></svg>
      <svg class="ime-i" viewBox="0 0 16 16"><rect x="0" y="2" width="16" height="12" rx="1.500" fill="#1b6fc4"/><path d="M2.500 5h11M2.500 8h11M5 11h6" stroke="#fff" stroke-width="1.200" stroke-dasharray="1.500 1"/></svg>
      <svg class="ime-i" viewBox="0 0 16 16"><circle cx="6" cy="4" r="3" fill="#aab6c2"/><path d="M1 14q0-6 5-6 3 0 4 2H8v4z" fill="#aab6c2"/><rect x="8.500" y="10" width="7" height="5" fill="#fff" stroke="#aab6c2"/></svg>
      <svg class="ime-i" viewBox="0 0 16 16"><path d="M5 1 1 4l2 3 1-1v9h8V6l1 1 2-3-4-3-3 2z" fill="#1b6fc4"/></svg>
      <svg class="ime-i" viewBox="0 0 16 16"><path d="M15 4l-3 3-3-1 0-3 3-3a5 5 0 0 0-5 6L1 12l3 3 6-6a5 5 0 0 0 5-5z" fill="#1b6fc4"/></svg>
    </div>
  </div>
  <div class="badge"><span>66</span></div>

  <div class="dialog" role="dialog">
    <div class="d-title"><span>选择箍筋 - [6×6]</span><svg class="d-x" viewBox="0 0 12 12"><path d="M1 1l10 10M11 1 1 11" stroke="#222" stroke-width="1"/></svg></div>
    <div class="d-body">
      <fieldset class="gb gb-top">
        <legend>箍筋选择</legend>
        <div class="gb-row">
          <div class="gb-side">
            <div class="radios">
              <label class="radio"><i class="rd on"></i><span><span class="a">B</span>边</span></label>
              <label class="radio"><i class="rd"></i><span><span class="a">H</span>边</span></label>
            </div>
            <fieldset class="gb gb-limb">
              <legend>肢数</legend>
              <div class="select"><span>6</span><svg class="sel-c" viewBox="0 0 12 8"><path d="M1 1.500l5 5 5-5" fill="none" stroke="#444"/></svg></div>
            </fieldset>
          </div>
          <div class="preview"><svg class="prev-svg" viewBox="0 0 184 143"><use href="#rebar" width="184" height="143"/></svg></div>
        </div>
      </fieldset>
      <fieldset class="gb gb-list">
        <legend>箍筋图</legend>
        <div class="thumbs">
          <div class="thumb sel-t">
            <svg class="t-svg" viewBox="24 20 573 407">
              <rect x="187.500" y="43.500" width="273" height="306" fill="none" stroke="#fff" stroke-width="3"/>
              <g fill="none" stroke="#f00" stroke-width="6"><rect x="204" y="57" width="240" height="276" rx="4"/><rect x="243" y="30" width="54" height="275"/><rect x="344" y="30" width="53" height="275"/></g>
              <g fill="#f00"><circle cx="211" cy="65" r="7"/><circle cx="437" cy="68" r="9"/><circle cx="211" cy="325" r="8"/><circle cx="437" cy="325" r="8"/><circle cx="252" cy="298" r="7"/><circle cx="288" cy="298" r="7"/><circle cx="353" cy="298" r="7"/><circle cx="388" cy="298" r="7"/><rect x="240" y="28" width="60" height="15"/><rect x="341" y="28" width="59" height="15"/></g>
              <path d="M204 113 225 103M344 104 365 94M243 272 264 262" stroke="#fff" stroke-width="3"/>
              <text class="tt" x="216" y="105">1#</text><text class="tt" x="355" y="98">2#</text><text class="tt" x="252" y="265">2#</text>
              <text class="tb-t" x="320" y="372" text-anchor="middle">B</text>
              <text class="tb-t" transform="translate(165 208) rotate(90)" text-anchor="middle">H</text>
              <text class="tl" x="305" y="407" text-anchor="middle">6-1型</text>
            </svg>
          </div>
          <div class="thumb">
            <svg class="t-svg" viewBox="611 20 576 407">
              <rect x="781.500" y="55.500" width="264" height="294" fill="none" stroke="#fff" stroke-width="3"/>
              <g fill="none" stroke="#f00" stroke-width="6"><rect x="795" y="68" width="235" height="264" rx="4"/><rect x="849" y="42" width="82" height="266" rx="3"/><rect x="890" y="32" width="85" height="265" rx="3"/></g>
              <g fill="#f00"><circle cx="802" cy="76" r="7"/><circle cx="1022" cy="76" r="8"/><circle cx="802" cy="325" r="8"/><circle cx="1022" cy="325" r="8"/><circle cx="856" cy="302" r="6"/><circle cx="966" cy="40" r="8"/></g>
              <path d="M792 125 812 113M887 103 907 93M846 280 866 270" stroke="#fff" stroke-width="3"/>
              <text class="tt" x="805" y="116">1#</text><text class="tt" x="897" y="96">2#</text><text class="tt" x="858" y="273">2#</text>
              <text class="tb-t" x="907" y="372" text-anchor="middle">B</text>
              <text class="tb-t" transform="translate(753 218) rotate(90)" text-anchor="middle">H</text>
              <text class="tl" x="889" y="405" text-anchor="middle">6-2型</text>
            </svg>
          </div>
          <div class="thumb">
            <svg class="t-svg" viewBox="24 441 573 406">
              <rect x="196.500" y="485.500" width="255" height="287" fill="none" stroke="#fff" stroke-width="3"/>
              <g fill="none" stroke="#f00" stroke-width="6"><rect x="205" y="497" width="235" height="260" rx="4"/><rect x="263" y="470" width="122" height="262" rx="3"/><rect x="302" y="451" width="42" height="259" rx="3"/></g>
              <g fill="#f00"><circle cx="212" cy="505" r="7"/><circle cx="432" cy="508" r="8"/><circle cx="212" cy="750" r="7"/><circle cx="433" cy="750" r="7"/><circle cx="270" cy="725" r="7"/><circle cx="378" cy="725" r="7"/><rect x="300" y="449" width="46" height="15"/><circle cx="372" cy="480" r="7"/></g>
              <path d="M206 550 226 540M300 522 320 512M260 703 280 693" stroke="#fff" stroke-width="3"/>
              <text class="tt" x="218" y="544">1#</text><text class="tt" x="309" y="515">3#</text><text class="tt" x="271" y="695">2#</text>
              <text class="tb-t" x="319" y="797" text-anchor="middle">B</text>
              <text class="tb-t" transform="translate(171 643) rotate(90)" text-anchor="middle">H</text>
              <text class="tl" x="301" y="828" text-anchor="middle">6-3型</text>
            </svg>
          </div>
        </div>
      </fieldset>
      <div class="d-btns"><span class="btn primary">确定</span><span class="btn">取消</span></div>
    </div>
  </div>

  <svg class="arrowlay" viewBox="0 0 1366 768" aria-hidden="true">
    <path d="M470 458 924 563" stroke="#f00" stroke-width="7" fill="none"/>
    <path d="M488 450 458 454 482 470M905 548 934 564 908 573" stroke="#f00" stroke-width="6" fill="none" stroke-linejoin="round" stroke-linecap="round"/>
    <path d="M458 454 482 455 478 466zM934 564 912 555 914 569z" fill="#f00"/>
  </svg>
  <div class="note n1">按照图纸的要求选择 <span class="note-b">【看一下详图】</span></div>
  <div class="note n2">选择不同，箍筋量是有差别的</div>
</div>
</body>
</html>
```
FILE: styles.css
```css
* { box-sizing: border-box; }
html, body { margin: 0; padding: 0; }
body { width: 1366px; height: 768px; overflow: hidden; background: #f0f0f0; font: 12px/16px "Noto Sans CJK SC", "Liberation Sans", sans-serif; color: #000; }
ul { list-style: none; margin: 0; padding: 0; }
i { font-style: normal; }
.defs { position: absolute; width: 0; height: 0; }
.a { font: 10px/1 "DejaVu Sans Mono", "Liberation Mono", monospace; white-space: pre; }
.bar { font-size: 10px; line-height: 1; }
.ic { width: 16px; height: 16px; flex: none; display: block; }
.desk { position: relative; width: 1366px; height: 768px; display: flex; flex-direction: column; overflow: hidden; }

.titlebar { height: 23px; background: #fff; display: flex; align-items: center; padding-left: 3px; flex: none; }
.title-text { margin-left: 4px; color: #7a7a7a; font-size: 12.5px; white-space: nowrap; }
.winctl { margin-left: auto; display: grid; grid-template-columns: 55px 55px 44px; justify-items: center; }
.wc { width: 12px; height: 12px; }

.menubar { height: 31px; background: #f4f4f4; display: flex; align-items: center; flex: none; padding-left: 5px; }
.menus { display: flex; gap: 10.7px; white-space: nowrap; }
.menu-extra { display: flex; align-items: center; margin-left: 9px; gap: 2px; white-space: nowrap; }
.mascot { margin-left: 5px; }
.tri { width: 0; height: 0; border: 3px solid transparent; border-top: 4px solid #333; border-bottom: 0; margin-left: 7px; display: inline-block; flex: none; vertical-align: middle; }
.tri.off { border-top-color: #999; }
.tipbox { width: 175px; height: 31px; margin-left: 8px; padding-left: 29px; line-height: 31px; color: #5a2a00; background: #fafafa; white-space: nowrap; }
.account { display: flex; align-items: center; gap: 5px; padding-left: 18px; white-space: nowrap; flex: 1; }
.bean { margin-left: 0; }
.bell { margin-left: 5px; }
.more { font: 13px/12px "Liberation Sans", sans-serif; font-weight: 700; color: #222; margin-left: auto; padding-right: 3px; align-self: flex-start; }

.toolbar { height: 28px; flex: none; display: flex; background: #f0f0f0; white-space: nowrap; }
.chunk { display: flex; align-items: center; height: 27px; background: linear-gradient(#fdfdfd, #f1f1f1); border-radius: 3px; }
.chunk-a { width: 150px; padding-left: 6px; gap: 8px; }
.chunk-b { width: 548px; margin-left: 2px; padding-left: 7px; gap: 9px; }
.chunk-c { flex: 1; margin-left: 5px; gap: 7px; }
.more-a { margin-left: auto; padding-right: 2px; align-self: flex-start; margin-top: 5px; }
.more-c { margin-left: auto; padding-right: 3px; align-self: flex-start; margin-top: 5px; }
.tool { display: inline-flex; align-items: center; gap: 3px; white-space: nowrap; }
.tool.off { color: #8a8a8a; }
.tool .tri { margin-left: 4px; }
.sigma { width: 18px; text-align: center; font-family: "Liberation Serif", serif; font-size: 14px; font-weight: 400; }
.combo2d { width: 62px; height: 22px; border: 1px solid #777; display: inline-flex; align-items: center; color: #8a8a8a; padding-left: 3px; gap: 4px; }
.combo2d .tri { margin-left: 2px; }
.sq { width: 14px; height: 14px; background: #e4e4e4; border: 1px solid #ccc; flex: none; }
.sep { width: 1px; height: 21px; background: #bbb; flex: none; }
.sep-tight { margin-left: -6px; }

.main { flex: 1; min-height: 0; display: flex; }
.nav { width: 255px; flex: none; display: flex; flex-direction: column; padding-top: 1px; background: #f0f0f0; }
.nav-title { height: 15px; line-height: 15px; font-size: 13px; border-top: 1px solid #888; white-space: nowrap; }
.nav-btn { height: 24px; line-height: 22px; text-align: center; background: #f0f0f0; border: 1px solid #a6a6a6; font-size: 12px; letter-spacing: .2px; flex: none; }
.nav-btn + .nav-btn { margin-top: -1px; }
.nav-btn.low { height: 23px; }
.nav-tools { height: 27px; display: flex; align-items: center; gap: 0; padding-left: 4px; background: linear-gradient(#fbfbfb, #ececec); border: 1px solid #bbb; border-top: 0; flex: none; }
.expand { width: 24px; height: 14px; }
.tree-wrap { height: 487px; display: flex; background: #fff; border: 1px solid #999; border-top: 1px solid #ccc; margin: 0 1px 2px 2px; overflow: hidden; flex: none; }
.tree { flex: 1; padding-top: 1px; min-width: 0; }
.grp, .kid { height: 16px; display: flex; align-items: center; white-space: nowrap; }
.caret { width: 11px; height: 11px; margin-left: 6px; flex: none; }
.stub { width: 6px; height: 1px; margin: 0 1px 0 1px; border-top: 1px dotted #777; flex: none; }
.grp .ic { width: 16px; }
.lb { margin-left: 3px; }
.grp .lb { margin-left: 3px; }
.kids { margin-left: 14px; background: repeating-linear-gradient(to bottom, #777 0 1px, transparent 1px 3px) left top / 1px 100% no-repeat; }
.kid { padding-left: 19px; }
.elbow { width: 11px; height: 16px; flex: none; background:
  repeating-linear-gradient(to bottom, #777 0 1px, transparent 1px 2px) left top / 1px 100% no-repeat,
  repeating-linear-gradient(to right, #777 0 1px, transparent 1px 2px) left 8px / 100% 1px no-repeat; }
.last .elbow { background:
  repeating-linear-gradient(to bottom, #777 0 1px, transparent 1px 2px) left top / 1px 9px no-repeat,
  repeating-linear-gradient(to right, #777 0 1px, transparent 1px 2px) left 8px / 100% 1px no-repeat; }
.kid .ic { width: 15px; }
.hl { display: inline-flex; align-items: center; height: 16px; background: #d8d8d8; padding-right: 1px; }
.vscroll { width: 17px; flex: none; display: flex; flex-direction: column; justify-content: flex-end; align-items: center; background: #f0f0f0; }
.arrow { width: 10px; height: 10px; margin-bottom: 4px; flex: none; }

.mid { width: 353px; margin: 30px 0 2px 5px; flex: none; display: flex; justify-content: flex-end; background: #fff; border: 1px solid #999; overflow: hidden; }
.kz { flex: 1; display: flex; flex-direction: column; justify-content: flex-end; padding-left: 31px; margin-bottom: -1px; font: 10px/16px "DejaVu Sans Mono", monospace; }
.kz li { height: 16px; flex: none; display: flex; align-items: center; }
.kz .ic { width: 14px; height: 14px; }
.kz span { margin-left: 6px; font-size: 10px; }
.kzline { width: 11px; height: 16px; background:
  repeating-linear-gradient(to bottom, #777 0 1px, transparent 1px 2px) left top / 1px 100% no-repeat,
  repeating-linear-gradient(to right, #777 0 1px, transparent 1px 2px) left 8px / 100% 1px no-repeat; }
.vs-mid { width: 13px; background: #f5f5f5; }

.right { flex: 1; min-width: 0; margin-left: 12px; display: flex; flex-direction: column; }
.row3 { height: 28px; flex: none; margin-left: -4px; padding-left: 31px; display: flex; align-items: center; gap: 5px; background: linear-gradient(#f2f2f2, #fbfbfb); white-space: nowrap; }
.row3 .tool { gap: 4px; }
.row3 .tool .tri { margin-left: 1px; }
.copy2 { margin-left: 1px; }
.row3 .find { margin-left: 3px; }
.tabs { height: 26px; flex: none; display: flex; background: #f3f3f3; }
.tab { width: 59px; height: 22px; padding: 3px 0 0 4px; background: #fff; white-space: nowrap; }
.tabfill { flex: 1; height: 20px; margin-top: 2px; background: #fff; border: 1px solid #ddd; border-bottom: 1px solid #bbb; }
.body { flex: 1; min-height: 0; display: flex; padding-bottom: 5px; }
.sheet { width: 450px; flex: none; background: #fff; border: 1px solid #ccc; border-top: 1px solid #bbb; padding: 1px 0 0 21px; }
.props { border-collapse: collapse; table-layout: fixed; width: 348px; }
.props th:nth-child(1) { width: 191px; }
.props th:nth-child(2) { width: 126px; }
.props th:nth-child(3) { width: 31px; }
.props th { height: 22px; padding: 0; font-weight: 400; font-size: 12px; line-height: 15px; border: 1px solid #c0c0c0; background: linear-gradient(to right, #eaeaea, #fff 12%); }
.props th.th-val { background: linear-gradient(#fcdfa5, #f2c064); color: #7a0a7a; }
.props th.th-add { background: linear-gradient(#fafafa, #ebebeb); }
.props td { height: 19px; padding: 0 0 0 2px; border: 1px solid #c0c0c0; white-space: nowrap; line-height: 15px; overflow: hidden; }
.props td:nth-child(1) { padding-left: 20px; background: linear-gradient(to right, #e9e9e9, #fff 12%); }
.props td:nth-child(3) { padding: 0; }
.blue td:nth-child(1) { color: #0000ee; }
.gray td:nth-child(1) { color: #8a8a8a; }
.cur td:nth-child(1) { background: #0078d7; color: #fff; }
.cur td:nth-child(2) { background: #d3e6f8; }
.chk { display: block; width: 13px; height: 13px; margin: 0 auto; border: 1px solid #333; background: #fff; }
.plus { display: inline-block; width: 13px; height: 13px; margin: 0 5px 0 -17px; border: 1px solid #aaa; vertical-align: middle; background:
  linear-gradient(#222, #222) center / 7px 1px no-repeat,
  linear-gradient(#222, #222) center / 1px 7px no-repeat, #f0f0f0; }

.views { width: 268px; flex: none; display: flex; flex-direction: column; padding-top: 1px; }
.pv { border: 1px solid #555; background: linear-gradient(#bccbdb, #d5e2ef 30px, #d5e2ef); padding: 0 7px 0 8px; flex: none; }
.pv-a { height: 282px; }
.pv-b { height: 281px; margin-top: 1px; }
.pv-a .pv-h { height: 31px; padding-top: 11px; }
.pv-b .pv-h { height: 30px; padding-top: 10px; }
.pv-h { line-height: 16px; color: #8f8f8f; font-size: 12px; }
.pv-img { display: block; width: 252px; height: 242px; background: #000; border-top: 1px solid #fff; }
.dim { font: 42px "Liberation Sans", sans-serif; fill: #fff; }
.vs-view { width: 15px; margin-left: 1px; justify-content: flex-start; background: #f0f0f0; }
.arrow-u { margin: 6px 0 3px; }
.vs-track { width: 15px; height: 272px; background: #c9c9c9; flex: none; }
.arrow-d { margin: 259px 0 0; }

.status { height: 21px; flex: none; background: #fff; display: flex; gap: 3px; white-space: nowrap; }
.cell { height: 19px; margin-top: 1px; border: 1px solid #e2e2e2; padding-left: 1px; line-height: 17px; flex: none; }
.c1 { width: 147px; }
.c2 { width: 77px; margin-left: 0; }
.c3 { width: 97px; }
.c4 { width: 48px; }
.c5 { width: 914px; }
.c6 { flex: 1; }

.taskbar { height: 40px; flex: none; display: flex; background: #0b1318; color: #fff; }
.start { width: 48px; background: #000; display: flex; align-items: center; justify-content: center; }
.winlogo { width: 16px; height: 16px; }
.search { width: 344px; background: #333; display: flex; align-items: center; padding-left: 11px; color: #9a9a9a; font-size: 13.8px; white-space: nowrap; }
.cortana { width: 18px; height: 18px; border: 2.5px solid #ddd; border-radius: 50%; margin-right: 7px; flex: none; }
.mic { width: 12px; height: 18px; margin-left: auto; margin-right: 15px; }
.tb { width: 49px; height: 40px; display: flex; align-items: center; justify-content: center; flex: none; }
.run { border-bottom: 2px solid #7ab8ee; }
.act { background: #3b4348; }
.tbi { width: 22px; height: 22px; }
.tbi.big { width: 26px; height: 26px; }
.tbsep { width: 30px; flex: none; margin: 9px 0; background: linear-gradient(#5a5f64, #5a5f64) 12px 0 / 1px 100% no-repeat; }
.tray { flex: 1; display: grid; grid-template-columns: 40px 26px 25px 23px 23px 30px 28px 28px 73px 49px 8px; justify-content: end; align-items: center; justify-items: center; color: #fff; min-width: 0; }
.tray-t { font-size: 12px; color: #ddd; margin-left: 8px; }
.tri-i { width: 16px; height: 15px; }
.tri-kb { width: 24px; height: 16px; }
.tray-z { font-size: 13px; }
.clock { display: flex; flex-direction: column; align-items: center; font-size: 12px; line-height: 19px; color: #eee; white-space: nowrap; }
.tri-n { width: 18px; height: 18px; }
.showdesk { width: 8px; height: 40px; background: #05090c; }

.ime { position: absolute; left: 794px; top: 3px; height: 24px; display: flex; align-items: center; }
.ime-s { width: 20px; height: 22px; flex: none; }
.ime-bar { width: 183px; height: 24px; display: flex; align-items: center; padding-left: 12px; gap: 7px; background: #fff; border: 1px solid #a8c8e4; }
.ime-z { color: #1b6fc4; font-size: 15px; width: 16px; }
.ime-p { color: #1b6fc4; font: 700 13px "Liberation Sans", sans-serif; width: 14px; }
.ime-i { width: 15px; height: 15px; flex: none; }
.badge { position: absolute; left: 1013px; top: -27px; width: 46px; height: 46px; border-radius: 50%; background: linear-gradient(#2aa03c, #4cc058); box-shadow: 0 1px 3px rgba(0,0,0,.55); border: 2px solid #d9e9d9; color: #fff; font: 700 12px/14px "Liberation Sans", sans-serif; display: flex; align-items: flex-end; justify-content: center; padding-bottom: 2px; }

.dialog { position: absolute; left: 208px; top: 68px; width: 438px; height: 565px; background: #f0f0f0; border: 1px solid #2e8de0; box-shadow: 0 2px 14px rgba(0,0,0,.35); display: flex; flex-direction: column; }
.d-title { height: 25px; background: #fff; display: flex; align-items: center; justify-content: space-between; padding: 0 9px 0 3px; flex: none; font-size: 12.5px; white-space: nowrap; }
.d-x { width: 11px; height: 11px; }
.d-body { padding: 7px 9px 0; display: flex; flex-direction: column; flex: 1; }
.gb { margin: 0; border: 1px solid #dadada; padding: 0; min-width: 0; }
.gb legend { padding: 0 2px; margin-left: -3px; line-height: 16px; height: 16px; }
.gb-top { height: 168px; padding: 1px 8px 0 8px; flex: none; }
.gb-row { display: flex; }
.gb-side { width: 62px; flex: none; }
.radios { height: 69px; border: 1px solid #dadada; padding: 18px 0 0 7px; display: flex; flex-direction: column; gap: 6px; }
.radio { display: flex; align-items: center; height: 16px; gap: 3px; white-space: nowrap; }
.rd { width: 13px; height: 13px; border: 1px solid #555; border-radius: 50%; background: #fff; flex: none; }
.rd.on { background: radial-gradient(circle, #333 0 3.2px, #fff 3.8px); }
.gb .gb-limb legend { margin-left: 0; }
.gb-limb { height: 66px; margin-top: 7px; padding: 12px 0 0 4px; }
.select { width: 51px; height: 20px; background: #e1e1e1; border: 1px solid #adadad; display: flex; align-items: center; justify-content: space-between; padding: 0 4px; }
.sel-c { width: 11px; height: 7px; }
.preview { margin-left: 82px; }
.prev-svg { display: block; width: 184px; height: 143px; background: #000; border-top: 1px solid #fff; border-left: 1px solid #fff; border-right: 1px solid #aaa; border-bottom: 1px solid #aaa; box-sizing: content-box; margin: -1px 0 0 -1px; }
.gb-list { height: 317px; margin-top: 7px; padding: 5px 10px 0 11px; flex: none; }
.gb-list legend { margin-left: -6px; }
.thumbs { height: 284px; width: 395px; border-top: 1px solid #aaa; border-left: 1px solid #aaa; display: grid; grid-template-columns: 191px 192px; grid-auto-rows: 136px; gap: 4px 5px; padding: 3px 3px 3px 2px; align-content: start; }
.thumb { background: #000; border-right: 1px solid #aaa; border-bottom: 1px solid #aaa; overflow: hidden; }
.sel-t { box-shadow: inset 0 0 0 3px #f00; }
.t-svg { display: block; width: 100%; height: 100%; }
.tt { font: 33px "DejaVu Sans Mono", monospace; fill: #fff; }
.tb-t { font: 28px "DejaVu Sans Mono", monospace; fill: #fff; }
.tl { font: 36px "Noto Sans CJK SC", sans-serif; fill: #fff; }
.d-btns { display: flex; justify-content: flex-end; gap: 15px; margin-top: 8px; padding-right: 4px; }
.btn { width: 72px; height: 23px; line-height: 21px; text-align: center; background: #e1e1e1; border: 1px solid #adadad; }
.primary { border: 2px solid #0078d7; line-height: 19px; }

.arrowlay { position: absolute; left: 0; top: 0; width: 1366px; height: 768px; pointer-events: none; }
.note { position: absolute; color: #f00; font-size: 20px; line-height: 26px; letter-spacing: 3px; white-space: nowrap; }
.note-b { letter-spacing: 3.3px; }
.n1 { left: 774px; top: 577px; }
.n2 { left: 718px; top: 614px; }
```
